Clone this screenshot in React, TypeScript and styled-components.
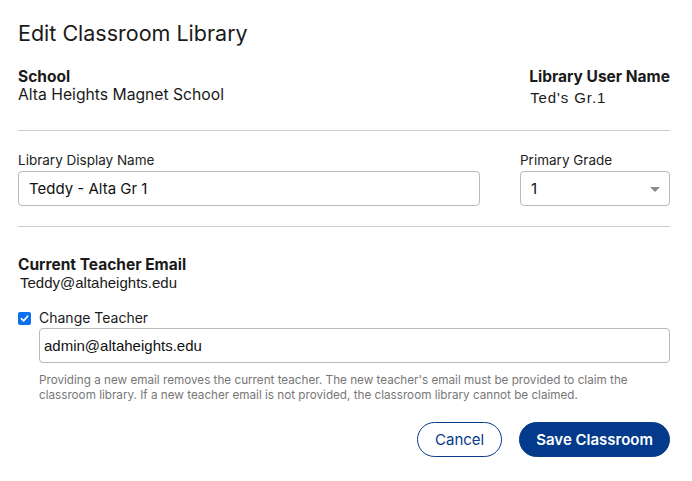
import { createGlobalStyle, styled } from "styled-components";

const GlobalStyle = createGlobalStyle`
  html, body {
    margin: 0;
    padding: 0;
    background: #ffffff;
  }
  body {
    font-family: "Inter", "Noto Sans", sans-serif;
    color: #1a1a1a;
  }
`;

const Dialog = styled.div`
  width: 652px;
  padding: 18px 22px 0 18px;
`;

const Title = styled.h1`
  margin: 0 0 20px;
  font-size: 21.5px;
  font-weight: 400;
  line-height: 30px;
  color: #1a1a1a;
`;

const InfoRow = styled.div`
  display: flex;
  justify-content: space-between;
  padding-bottom: 23px;
  border-bottom: 1px solid #cfcfcf;
`;

const InfoBlock = styled.div`
  display: flex;
  flex-direction: column;
`;

const InfoLabel = styled.div`
  font-size: 15.5px;
  font-weight: 700;
  line-height: 18px;
`;

const InfoValue = styled.div`
  font-size: 15.7px;
  line-height: 18px;
`;

const PlainValue = styled.div<{ $spaced?: boolean }>`
  font-family: "Liberation Sans", Arial, sans-serif;
  font-size: 15px;
  line-height: 18px;
  margin-left: ${(p) => (p.$spaced ? "1px" : "2px")};
  margin-top: ${(p) => (p.$spaced ? "3px" : "0")};
  letter-spacing: ${(p) => (p.$spaced ? "0.9px" : "0")};
`;

const FieldRow = styled.div`
  display: grid;
  grid-template-columns: 462px 150px;
  justify-content: space-between;
  padding: 21px 0 20px;
  border-bottom: 1px solid #cfcfcf;
`;

const Field = styled.label`
  display: flex;
  flex-direction: column;
  gap: 2px;
`;

const FieldLabel = styled.span`
  font-size: 13.5px;
  line-height: 17px;
  color: #222;
`;

const TextBox = styled.div<{ $sans?: boolean }>`
  position: relative;
  height: 35px;
  box-sizing: border-box;
  border: 1px solid #b9b9b9;
  border-radius: 4px;
  display: flex;
  align-items: center;
  padding: ${(p) => (p.$sans ? "0 4px" : "0 10px")};
  font-size: 15px;
  font-family: ${(p) =>
    p.$sans ? '"Liberation Sans", Arial, sans-serif' : '"Inter", sans-serif'};
  color: #111;
`;

const Caret = styled.span`
  position: absolute;
  right: 9px;
  top: 15px;
  width: 0;
  height: 0;
  border-left: 5px solid transparent;
  border-right: 5px solid transparent;
  border-top: 5px solid #8a8a8a;
`;

const TeacherSection = styled.div`
  padding-top: 29px;
`;

const CheckRow = styled.div`
  display: flex;
  align-items: center;
  gap: 8px;
  margin-top: 17px;
`;

const CheckBox = styled.span`
  width: 13px;
  height: 13px;
  border-radius: 2px;
  background: #0b6ff0;
  display: flex;
  align-items: center;
  justify-content: center;
`;

const CheckLabel = styled.span`
  font-size: 14px;
  line-height: 18px;
`;

const Indented = styled.div`
  margin-left: 21px;
  margin-top: 1px;
`;

const HelpText = styled.p`
  margin: 10px 0 0;
  font-size: 11.7px;
  line-height: 15px;
  color: #777;
`;

const Actions = styled.div`
  display: flex;
  justify-content: flex-end;
  gap: 17px;
  margin-top: 19px;
`;

const Button = styled.button<{ $primary?: boolean }>`
  height: 35px;
  border-radius: 18px;
  font-family: "Inter", sans-serif;
  font-size: 15px;
  cursor: pointer;
  border: 1px solid #0a3a8c;
  background: ${(p) => (p.$primary ? "#043a8c" : "#fff")};
  color: ${(p) => (p.$primary ? "#fff" : "#0a3a8c")};
  font-weight: ${(p) => (p.$primary ? 600 : 400)};
  padding: ${(p) => (p.$primary ? "0 16px" : "0 17px")};
`;

export default function App() {
  return (
    <>
      <GlobalStyle />
      <Dialog>
        <Title>Edit Classroom Library</Title>
        <InfoRow>
          <InfoBlock>
            <InfoLabel>School</InfoLabel>
            <InfoValue>Alta Heights Magnet School</InfoValue>
          </InfoBlock>
          <InfoBlock>
            <InfoLabel>Library User Name</InfoLabel>
            <PlainValue $spaced>Ted's Gr.1</PlainValue>
          </InfoBlock>
        </InfoRow>

        <FieldRow>
          <Field>
            <FieldLabel>Library Display Name</FieldLabel>
            <TextBox>Teddy - Alta Gr 1</TextBox>
          </Field>
          <Field>
            <FieldLabel>Primary Grade</FieldLabel>
            <TextBox>
              1
              <Caret />
            </TextBox>
          </Field>
        </FieldRow>

        <TeacherSection>
          <InfoLabel>Current Teacher Email</InfoLabel>
          <PlainValue>Teddy@altaheights.edu</PlainValue>

          <CheckRow>
            <CheckBox>
              <svg width="9" height="9" viewBox="0 0 10 10">
                <path
                  d="M1.5 5.2 L4 7.6 L8.6 2.4"
                  fill="none"
                  stroke="#fff"
                  strokeWidth="1.8"
                  strokeLinecap="round"
                  strokeLinejoin="round"
                />
              </svg>
            </CheckBox>
            <CheckLabel>Change Teacher</CheckLabel>
          </CheckRow>
          <Indented>
            <TextBox $sans>admin@altaheights.edu</TextBox>
            <HelpText>
              Providing a new email removes the current teacher. The new
              teacher's email must be provided to claim the classroom library.
              If a new teacher email is not provided, the classroom library
              cannot be claimed.
            </HelpText>
          </Indented>
        </TeacherSection>

        <Actions>
          <Button>Cancel</Button>
          <Button $primary>Save Classroom</Button>
        </Actions>
      </Dialog>
    </>
  );
}
